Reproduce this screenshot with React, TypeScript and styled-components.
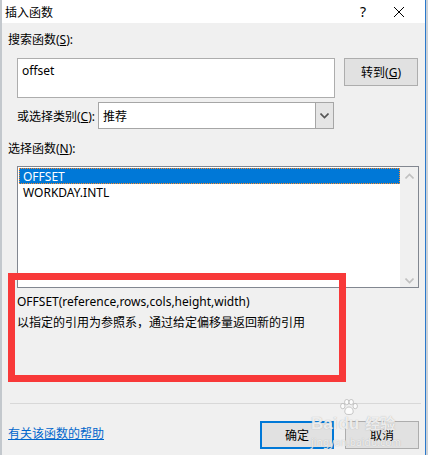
import React from 'react';
import styled, { createGlobalStyle } from 'styled-components';

const GlobalStyle = createGlobalStyle`
  html, body {
    margin: 0;
    padding: 0;
    background: #cdd2d7;
  }
  body {
    font-family: 'Noto Sans', 'Noto Sans CJK SC', sans-serif;
    font-size: 12px;
    color: #000;
  }
`;

const Page = styled.div`
  display: flex;
  width: 428px;
  height: 455px;
  overflow: hidden;
`;

const Dialog = styled.div`
  position: relative;
  display: flex;
  flex-direction: column;
  width: 423px;
  height: 455px;
  border-left: 2px solid #c3c8cd;
  border-right: 1px solid #2b79cc;
  background: #f0f0f0;
`;

const TitleBar = styled.div`
  display: flex;
  align-items: center;
  height: 23px;
  padding-left: 3px;
  padding-right: 3px;
  background: #fff;
`;

const Title = styled.span`
  flex: 1;
  font-size: 12px;
`;

const TitleButton = styled.span<{ $w: number }>`
  display: flex;
  align-items: center;
  justify-content: center;
  width: ${(p) => p.$w}px;
  font-size: 14px;
`;

const Body = styled.div`
  display: flex;
  flex-direction: column;
  padding: 0 6px;
  flex: 1;
`;

const Label = styled.div<{ $top: number }>`
  margin-top: ${(p) => p.$top}px;
  line-height: 16px;
  white-space: nowrap;
`;

const Key = styled.span`
  text-decoration: underline;
`;

const SearchRow = styled.div`
  display: flex;
  align-items: flex-start;
  gap: 9px;
  margin-top: 10px;
  padding-left: 9px;
`;

const TextBox = styled.div`
  box-sizing: border-box;
  width: 318px;
  height: 40px;
  padding: 4px 4px;
  background: #fff;
  border: 1px solid #adadad;
  line-height: 16px;
`;

const Button = styled.div<{ $primary?: boolean }>`
  box-sizing: border-box;
  display: flex;
  align-items: center;
  justify-content: center;
  width: 74px;
  height: 28px;
  background: #e1e1e1;
  border: ${(p) => (p.$primary ? '2px solid #0078d7' : '1px solid #adadad')};
`;

const CategoryRow = styled.div`
  display: flex;
  align-items: center;
  margin-top: 4px;
  padding-left: 9px;
`;

const Select = styled.div`
  box-sizing: border-box;
  display: flex;
  width: 236px;
  height: 27px;
  margin-left: 3px;
  background: #fff;
  border: 1px solid #a6a6a6;
`;

const SelectValue = styled.div`
  flex: 1;
  display: flex;
  align-items: center;
  padding-left: 4px;
`;

const SelectArrow = styled.div`
  display: flex;
  align-items: center;
  justify-content: center;
  width: 17px;
  background: #e5e5e5;
  border-left: 1px solid #a6a6a6;
`;

const ListBox = styled.div`
  box-sizing: border-box;
  display: flex;
  width: 402px;
  height: 122px;
  margin: 9px 0 0 9px;
  background: #fff;
  border: 1px solid #828790;
`;

const Items = styled.div`
  flex: 1;
  padding: 1px 0 0 1px;
`;

const Item = styled.div<{ $selected?: boolean }>`
  box-sizing: border-box;
  height: 16px;
  padding-left: 3px;
  line-height: 15px;
  background: ${(p) => (p.$selected ? '#0078d7' : 'transparent')};
  color: ${(p) => (p.$selected ? '#fff' : '#000')};
  border: 1px dotted ${(p) => (p.$selected ? '#ff8b28' : 'transparent')};
`;

const ScrollBar = styled.div`
  display: flex;
  flex-direction: column;
  justify-content: space-between;
  align-items: center;
  width: 18px;
  padding: 6px 0 3px;
  background: #f0f0f0;
`;

const Desc = styled.div`
  height: 112px;
  margin: 3px 0 0 9px;
  line-height: 21px;
`;

const Separator = styled.div`
  height: 1px;
  margin-left: 2px;
  width: 411px;
  background: #d8d8d8;
`;

const Footer = styled.div`
  display: flex;
  align-items: center;
  gap: 11px;
  margin-top: 17px;
`;

const HelpLink = styled.span`
  flex: 1;
  color: #0066cc;
  text-decoration: underline;
  padding-bottom: 5px;
`;

const Annotation = styled.div`
  position: absolute;
  left: 6px;
  top: 273px;
  box-sizing: border-box;
  width: 338px;
  height: 109px;
  border: 7px solid #f83939;
  pointer-events: none;
`;

const Watermark = styled.div`
  position: absolute;
  left: 309px;
  top: 399px;
  display: flex;
  flex-direction: column;
  align-items: flex-start;
  color: rgba(255, 255, 255, 0.8);
  text-shadow: 0 0 1px rgba(150, 150, 150, 0.8);
  pointer-events: none;
`;

const MarkRow = styled.div`
  display: flex;
  align-items: flex-end;
  font-family: 'Liberation Sans', 'Noto Sans CJK SC', sans-serif;
  font-size: 17px;
  font-weight: bold;
  line-height: 18px;
`;

const MarkPaw = styled.div`
  display: flex;
  flex-direction: column;
  align-items: center;
  margin: 0 2px 0 1px;
`;

const MarkCn = styled.span`
  margin-left: 4px;
  font-size: 15px;
`;

const MarkUrl = styled.div`
  margin-top: 4px;
  font-size: 10px;
  line-height: 11px;
  letter-spacing: 0.2px;
`;

const Chevron: React.FC<{ up?: boolean; color?: string }> = ({ up, color = '#c1c1c1' }) => (
  <svg width="9" height="6" viewBox="0 0 9 6">
    <path
      d={up ? 'M0.5 5.5 L4.5 1.5 L8.5 5.5' : 'M0.5 0.5 L4.5 4.5 L8.5 0.5'}
      fill="none"
      stroke={color}
      strokeWidth="1.6"
    />
  </svg>
);

const Paw = () => (
  <svg width="20" height="16" viewBox="0 0 22 18">
    <g fill="rgba(255,255,255,0.8)" stroke="rgba(150,150,150,0.7)" strokeWidth="0.8">
      <ellipse cx="4" cy="8" rx="2.5" ry="3" />
      <ellipse cx="8.5" cy="3.5" rx="2.5" ry="3" />
      <ellipse cx="13.5" cy="3.5" rx="2.5" ry="3" />
      <ellipse cx="18" cy="8" rx="2.5" ry="3" />
      <path d="M11 9 C6 9 5 16 8 17 C10 17.6 12 17.6 14 17 C17 16 16 9 11 9 Z" />
    </g>
  </svg>
);

export default function App() {
  return (
    <>
      <GlobalStyle />
      <Page>
        <Dialog>
          <TitleBar>
            <Title>插入函数</Title>
            <TitleButton $w={26}>?</TitleButton>
            <TitleButton $w={46}>
              <svg width="12" height="12" viewBox="0 0 12 12">
                <path d="M1 1 L11 11 M11 1 L1 11" stroke="#000" strokeWidth="1" />
              </svg>
            </TitleButton>
          </TitleBar>
          <Body>
            <Label $top={9}>
              搜索函数(<Key>S</Key>):
            </Label>
            <SearchRow>
              <TextBox>offset</TextBox>
              <Button>
                转到(<Key>G</Key>)
              </Button>
            </SearchRow>
            <CategoryRow>
              <span>
                或选择类别(<Key>C</Key>):
              </span>
              <Select>
                <SelectValue>推荐</SelectValue>
                <SelectArrow>
                  <Chevron color="#555" />
                </SelectArrow>
              </Select>
            </CategoryRow>
            <Label $top={12}>
              选择函数(<Key>N</Key>):
            </Label>
            <ListBox>
              <Items>
                <Item $selected>OFFSET</Item>
                <Item>WORKDAY.INTL</Item>
              </Items>
              <ScrollBar>
                <Chevron up />
                <Chevron />
              </ScrollBar>
            </ListBox>
            <Desc>
              <div>OFFSET(reference,rows,cols,height,width)</div>
              <div>以指定的引用为参照系，通过给定偏移量返回新的引用</div>
            </Desc>
            <Separator />
            <Footer>
              <HelpLink>有关该函数的帮助</HelpLink>
              <Button $primary>确定</Button>
              <Button>取消</Button>
            </Footer>
          </Body>
          <Annotation />
          <Watermark>
            <MarkRow>
              Bai
              <MarkPaw>
                <Paw />
                du
              </MarkPaw>
              <MarkCn>经验</MarkCn>
            </MarkRow>
            <MarkUrl>jingyan.baidu.com</MarkUrl>
          </Watermark>
        </Dialog>
      </Page>
    </>
  );
}
